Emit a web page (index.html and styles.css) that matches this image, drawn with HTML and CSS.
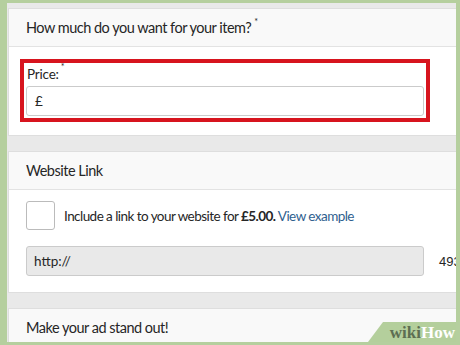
FILE: index.html
```html
<!DOCTYPE html>
<html>
<head>
<meta charset="utf-8">
<link rel="stylesheet" href="styles.css">
</head>
<body>
<div class="page">
  <section class="card">
    <div class="card-head">How much do you want for your item?<sup class="req">*</sup></div>
    <div class="card-body">
      <div class="highlight">
        <div class="label">Price:<sup class="req">*</sup></div>
        <div class="input">£</div>
      </div>
    </div>
  </section>
  <section class="card">
    <div class="card-head">Website Link</div>
    <div class="card-body body2">
      <div class="check-row">
        <span class="checkbox"></span>
        <span class="check-text">Include a link to your website for <b>£5.00.</b> <a class="link">View example</a></span>
      </div>
      <div class="url-row">
        <div class="input disabled">http://</div>
        <span class="count">493</span>
      </div>
    </div>
  </section>
  <section class="card">
    <div class="card-head">Make your ad stand out!</div>
  </section>
</div>
<div class="wm"><span class="wm-wiki">wiki</span><span class="wm-how">How</span></div>
</body>
</html>
```
FILE: styles.css
```css
html, body { margin: 0; padding: 0; }
body {
  width: 460px;
  height: 345px;
  background: #b5cf9e;
  overflow: hidden;
  position: relative;
  font-family: "Lato", "Liberation Sans", sans-serif;
  color: #262626;
}
.page {
  margin: 3px 4px 0 7px;
  height: 339px;
  background: #e9e9e9;
  overflow: hidden;
  padding-top: 5px;
  box-sizing: border-box;
}
.card {
  margin-left: 1px;
  margin-bottom: 15px;
  background: #fff;
  border: 1px solid #dedede;
  border-right: none;
}
.card-head {
  height: 37px;
  background: #f9f9f9;
  border-bottom: 1px solid #e3e3e3;
  padding-left: 17px;
  font-size: 14.5px;
  letter-spacing: -0.5px;
  line-height: 37px;
}
.req {
  font-size: 9px;
  vertical-align: top;
  line-height: 1;
  position: relative;
  top: 8px;
  margin-left: 3px;
}
.label .req { top: -2px; margin-left: 2px; }
.card-body {
  padding: 12px 26px 13px 11px;
}
.highlight {
  border: 4px solid #d7141e;
  padding: 1px 2px 2px 2px;
}
.label {
  font-size: 13.5px;
  letter-spacing: -0.2px;
  height: 22px;
  line-height: 21px;
  padding-left: 1px;
}
.input {
  height: 28px;
  border: 1px solid #cbcbcb;
  border-radius: 3px;
  background: #fff;
  font-size: 13.5px;
  line-height: 28px;
  padding-left: 8px;
}
.body2 {
  padding: 11px 0 16px 17px;
}
.check-row {
  display: flex;
  align-items: center;
  gap: 9px;
  height: 29px;
}
.checkbox {
  width: 27px;
  height: 27px;
  border: 1px solid #bbb;
  border-radius: 3px;
  box-sizing: content-box;
}
.check-text { font-size: 13.5px; letter-spacing: -0.55px; }
.check-text b { font-weight: 700; }
.link { color: #2f5f8f; }
.url-row {
  margin-top: 16px;
  display: flex;
  align-items: center;
}
.url-row .input {
  width: 389px;
  flex: none;
  background: #e9e9e9;
  padding-left: 7px;
}
.count {
  margin-left: 15px;
  font-size: 13px;
  font-family: "Liberation Sans", sans-serif;
}
.wm {
  position: absolute;
  right: 4px;
  bottom: 3px;
  width: 88px;
  height: 20px;
  background: rgba(168, 200, 140, 0.85);
  clip-path: polygon(15px 0, 100% 0, 100% 100%, 0 100%);
  font-family: "Liberation Serif", serif;
  font-weight: 700;
  font-size: 17px;
  line-height: 21px;
  text-align: right;
  padding-right: 1px;
  box-sizing: border-box;
}
.wm-wiki { color: #5d6e52; }
.wm-how { color: #fff; }
```
